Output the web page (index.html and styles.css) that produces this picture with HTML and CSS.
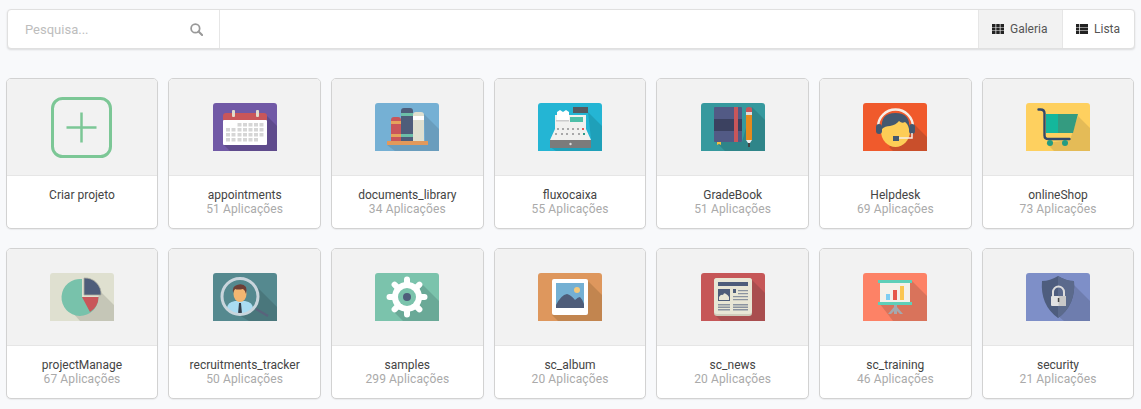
FILE: index.html
```html
<!DOCTYPE html>
<html lang="pt">
<head>
<meta charset="utf-8">
<title>Projetos</title>
<link rel="stylesheet" href="styles.css">
</head>
<body>
<header class="toolbar">
  <div class="search">
    <span class="placeholder">Pesquisa...</span>
    <svg class="search-icon" viewBox="0 0 14 14" width="13" height="13"><circle cx="5.8" cy="5.800" r="4.600" fill="none" stroke="#999" stroke-width="1.900"/><path d="M9.200 9.200 13 13" stroke="#999" stroke-width="2.200" stroke-linecap="round"/></svg>
  </div>
  <div class="spacer"></div>
  <div class="view view-gallery active">
    <svg viewBox="0 0 12 10" width="12" height="10" fill="#222"><path d="M0 0h3.500v2.900H0zM4.250 0h3.500v2.900h-3.500zM8.500 0H12v2.900H8.500zM0 3.550h3.500v2.900H0zM4.250 3.550h3.500v2.900h-3.500zM8.500 3.550H12v2.900H8.500zM0 7.100h3.500V10H0zM4.250 7.100h3.500V10h-3.500zM8.500 7.100H12V10H8.500z"/></svg>
    <span>Galeria</span>
  </div>
  <div class="view view-list">
    <svg viewBox="0 0 12 10" width="12" height="10" fill="#222"><path d="M0 0h3v2.900H0zM3.700 0H12v2.900H3.700zM0 3.550h3v2.900H0zM3.700 3.550H12v2.900H3.700zM0 7.100h3V10H0zM3.700 7.100H12V10H3.700z"/></svg>
    <span>Lista</span>
  </div>
</header>

<main class="grid">
  <article class="card">
    <div class="thumb">
      <svg viewBox="0 0 61 61" width="61" height="61"><rect x="1.500" y="1.500" width="58" height="58" rx="10" fill="none" stroke="#7cc796" stroke-width="3"/><path d="M30.500 15.500v30M15.500 30.500h30" stroke="#7cc796" stroke-width="2.500"/></svg>
    </div>
    <div class="info"><div class="name">Criar projeto</div></div>
  </article>

  <article class="card">
    <div class="thumb">
      <svg class="icon" viewBox="0 0 64 48" width="64" height="48">
        <rect width="64" height="48" fill="#7159a6"/>
        <path d="M54 13 64 23V48H17L10 41Z" fill="#5f4b8c"/>
        <rect x="10" y="17" width="44" height="25" rx="1" fill="#fff"/>
        <path d="M10 17v-4a3 3 0 0 1 3-3h38a3 3 0 0 1 3 3v4z" fill="#c9565a"/>
        <rect x="19" y="7" width="3" height="7" rx="1" fill="#e2dccb"/><rect x="43" y="7" width="3" height="7" rx="1" fill="#e2dccb"/>
        <path d="M24.500 20h4v3.500h-4zM30 20h4v3.500h-4zM35.500 20h4v3.500h-4zM41 20h4v3.500h-4zM46.500 20h4v3.500h-4zM13 25h4v3.500h-4zM18.500 25h4v3.500h-4zM24.500 25h4v3.500h-4zM30 25h4v3.500h-4zM35.500 25h4v3.500h-4zM41 25h4v3.500h-4zM46.500 25h4v3.500h-4zM13 30h4v3.500h-4zM18.500 30h4v3.500h-4zM24.500 30h4v3.500h-4zM30 30h4v3.500h-4zM35.500 30h4v3.500h-4zM41 30h4v3.500h-4zM46.500 30h4v3.500h-4zM13 35h4v3.500h-4zM18.500 35h4v3.500h-4zM24.500 35h4v3.500h-4zM30 35h4v3.500h-4zM35.500 35h4v3.500h-4zM41 35h4v3.500h-4z" fill="#d6d6d6"/>
      </svg>
    </div>
    <div class="info"><div class="name">appointments</div><div class="count">51 Aplicações</div></div>
  </article>

  <article class="card">
    <div class="thumb">
      <svg class="icon" viewBox="0 0 64 48" width="64" height="48">
        <rect width="64" height="48" fill="#75b0d4"/>
        <path d="M49 11 64 26V48H20L12 42 50 38Z" fill="#6a9dbd"/>
        <path d="M16 39V17q0-3 3-3h4q3 0 3 3v22z" fill="#c9565a"/>
        <path d="M16 18h10v3H16zM16 31h10v3H16z" fill="#e5a35c"/>
        <path d="M26 39V8q0-3 3-3h6q3 0 3 3v31z" fill="#4e5d7a"/>
        <path d="M26 10h12v3H26zM26 31h12v3H26z" fill="#6cbfa8"/>
        <path d="M38 39V12q0-3 3-3h5q3 0 3 3v27z" fill="#dfe0d0"/>
        <path d="M38 13h11v4H38z" fill="#fff"/>
        <rect x="12" y="38" width="41" height="4" fill="#e2995b"/>
      </svg>
    </div>
    <div class="info"><div class="name">documents_library</div><div class="count">34 Aplicações</div></div>
  </article>

  <article class="card">
    <div class="thumb">
      <svg class="icon" viewBox="0 0 64 48" width="64" height="48">
        <rect width="64" height="48" fill="#24b5d4"/>
        <path d="M50 9 64 23V48H18L12 44 53 36Z" fill="#1fa0b9"/>
        <rect x="35" y="4" width="15" height="6" fill="#555a60"/>
        <path d="M17 12h31v14l5 11H12l5-11z" fill="#f1f1ef"/>
        <path d="M19 9l3-2 3 2 3-2 3 2v8H19z" fill="#fff"/>
        <rect x="18" y="17" width="13" height="1.500" fill="#ccc"/>
        <rect x="32" y="14" width="13" height="5" fill="#4dbfa8"/>
        <path d="M19 25h2v2h-2zM24 25h2v2h-2zM29 25h2v2h-2zM34 25h2v2h-2zM39 25h2v2h-2zM17 30h2v2h-2zM23 30h2v2h-2zM28 30h2v2h-2zM34 30h2v2h-2zM40 30h2v2h-2z" fill="#a8a8a8"/>
        <rect x="44" y="25" width="2" height="2" fill="#e25c5c"/><rect x="45" y="30" width="2" height="2" fill="#2c9c88"/>
        <rect x="12" y="37" width="41" height="8" fill="#7b7b7b"/>
        <circle cx="32.500" cy="41" r="1.200" fill="#ddd"/>
      </svg>
    </div>
    <div class="info"><div class="name">fluxocaixa</div><div class="count">55 Aplicações</div></div>
  </article>

  <article class="card">
    <div class="thumb">
      <svg class="icon" viewBox="0 0 64 48" width="64" height="48">
        <rect width="64" height="48" fill="#36999e"/>
        <path d="M51 4 64 17V48H24L15 39 41 39Z" fill="#2f8589"/>
        <rect x="13" y="4" width="28" height="35" rx="1" fill="#525a85"/>
        <rect x="13" y="16" width="28" height="12" fill="#3b4160"/>
        <rect x="33" y="4" width="4" height="35" fill="#c9565a"/>
        <path d="M16 39h4v3l-2-1-2 1z" fill="#f0c040"/>
        <path d="M45 6q0-2 3-2t3 2v3h-6z" fill="#c9565a"/>
        <rect x="45" y="9" width="6" height="3" fill="#ddd"/>
        <rect x="45" y="12" width="6" height="25" fill="#e58a1e"/>
        <path d="M45 37h6l-2 3h-2z" fill="#eee"/><path d="M47 40h2v4h-2z" fill="#444"/>
      </svg>
    </div>
    <div class="info"><div class="name">GradeBook</div><div class="count">51 Aplicações</div></div>
  </article>

  <article class="card">
    <div class="thumb">
      <svg class="icon" viewBox="0 0 64 48" width="64" height="48">
        <rect width="64" height="48" fill="#f05a2c"/>
        <path d="M50 20 64 34V48H30L26 44 46 32Z" fill="#c94f2b"/>
        <path d="M15 24a17.500 17.500 0 0 1 35 0" fill="none" stroke="#f6eee6" stroke-width="2.400"/>
        <ellipse cx="32.500" cy="28" rx="14.500" ry="16" fill="#fdcd56"/>
        <path d="M19 26q-2-16 13.500-16T46 26q-1-5-4-7-3 2-6-1-3 4-9 5-5 0-8 3z" fill="#44586f"/>
        <rect x="13" y="21" width="6" height="10" rx="3" fill="#44586f"/>
        <rect x="46" y="21" width="6" height="10" rx="3" fill="#44586f"/>
        <path d="M49 30v5H36" fill="none" stroke="#f6eee6" stroke-width="1.500"/>
        <rect x="30" y="33" width="6" height="5" fill="#44586f"/>
      </svg>
    </div>
    <div class="info"><div class="name">Helpdesk</div><div class="count">69 Aplicações</div></div>
  </article>

  <article class="card">
    <div class="thumb">
      <svg class="icon" viewBox="0 0 64 48" width="64" height="48">
        <rect width="64" height="48" fill="#fed05f"/>
        <path d="M52 13 64 25V48H28L20 40 44 37Z" fill="#e4bb57"/>
        <path d="M20 11h12v19H20z" fill="#14b79c"/>
        <path d="M32 11h20l-5 19H32z" fill="#349b80"/>
        <path d="M12.500 6.500h2q4 0 4 4v22q0 3.500 4 3.500h21" fill="none" stroke="#33496a" stroke-width="2.400" stroke-linecap="round"/>
        <circle cx="24" cy="40" r="3" fill="#249c82"/><circle cx="39" cy="40" r="3" fill="#249c82"/>
      </svg>
    </div>
    <div class="info"><div class="name">onlineShop</div><div class="count">73 Aplicações</div></div>
  </article>

  <article class="card">
    <div class="thumb">
      <svg class="icon" viewBox="0 0 64 48" width="64" height="48">
        <rect width="64" height="48" fill="#dfe0d0"/>
        <path d="M50 18 64 32V48H30L22 39 46 32Z" fill="#c5c6b7"/>
        <path d="M32 6A18.500 18.500 0 1 0 48.500 24H32Z" fill="#78c2ab"/>
        <path d="M32 24h16.500A18 18 0 0 1 40 39Z" fill="#c9565a"/>
        <path d="M34 5a16 16 0 0 1 17 17H34Z" fill="#4e5d7a" stroke="#a9aba0" stroke-width=".8"/>
      </svg>
    </div>
    <div class="info"><div class="name">projectManage</div><div class="count">67 Aplicações</div></div>
  </article>

  <article class="card">
    <div class="thumb">
      <svg class="icon" viewBox="0 0 64 48" width="64" height="48">
        <rect width="64" height="48" fill="#55898f"/>
        <path d="M40 10 64 34V48H36L16 36Z" fill="#4a777c"/>
        <circle cx="27" cy="23.500" r="18" fill="#55898f"/>
        <path d="M14 36q0-7 8-8h10q8 1 8 8a18 18 0 0 1-26 0z" fill="#a9dcf2"/>
        <path d="M26 30h2l1 11h-4z" fill="#333d4a"/>
        <ellipse cx="27" cy="21" rx="6.500" ry="8" fill="#f3b671"/>
        <path d="M20 20q-1-7 4-8 6-2 9 2 1 3 0 7-1-4-3-5-5 1-8 0-1 1-2 4z" fill="#6d3f36"/>
        <circle cx="27" cy="23.500" r="18" fill="none" stroke="#c9d5dc" stroke-width="3"/>
        <path d="M43 36 55 43" stroke="#59637c" stroke-width="2.200"/>
      </svg>
    </div>
    <div class="info"><div class="name">recruitments_tracker</div><div class="count">50 Aplicações</div></div>
  </article>

  <article class="card">
    <div class="thumb">
      <svg class="icon" viewBox="0 0 64 48" width="64" height="48">
        <rect width="64" height="48" fill="#7bc3ac"/>
        <path d="M44 8 64 28V48H28L18 38Z" fill="#6aa997"/>
        <circle cx="32" cy="24" r="15" fill="#fff"/>
        <path d="M32 6.500V41.500M14.500 24H49.500M19.600 11.600 44.400 36.400M44.400 11.600 19.600 36.400" stroke="#fff" stroke-width="6" stroke-linecap="round"/>
        <circle cx="32" cy="24" r="9" fill="#7bc3ac"/>
        <circle cx="32" cy="24" r="4" fill="#4e5d7a"/>
      </svg>
    </div>
    <div class="info"><div class="name">samples</div><div class="count">299 Aplicações</div></div>
  </article>

  <article class="card">
    <div class="thumb">
      <svg class="icon" viewBox="0 0 64 48" width="64" height="48">
        <rect width="64" height="48" fill="#de975d"/>
        <path d="M50 8 64 22V48H20L14 42Z" fill="#c2854f"/>
        <rect x="14" y="6" width="36" height="36" rx="2" fill="#fff"/>
        <rect x="18" y="10" width="28" height="25" fill="#74b0d3"/>
        <circle cx="39" cy="17" r="3" fill="#f5c97a"/>
        <path d="M18 35v-3q5-10 11-11 4 1 8 6 3-3 5-3 3 3 4 7v4z" fill="#4e5d7a"/>
      </svg>
    </div>
    <div class="info"><div class="name">sc_album</div><div class="count">20 Aplicações</div></div>
  </article>

  <article class="card">
    <div class="thumb">
      <svg class="icon" viewBox="0 0 64 48" width="64" height="48">
        <rect width="64" height="48" fill="#c65758"/>
        <path d="M50 6 64 20V48H20L14 42Z" fill="#a94e4f"/>
        <rect x="13" y="5" width="38" height="38" rx="3" fill="#cfcdbc"/>
        <rect x="13" y="5" width="38" height="36" rx="3" fill="#e8e6d5"/>
        <rect x="17" y="9" width="30" height="4" fill="#4e5d7a"/>
        <rect x="17" y="16" width="12" height="12" fill="#4e5d7a"/>
        <path d="M18 27v-3q2-3 4-2 1-3 3-1 2 1 3 3v3z" fill="#e8e6d5"/>
        <rect x="32" y="16" width="3" height="4" fill="#4e5d7a"/>
        <path d="M37 17h10v1.200H37zM37 20h10v1.200H37zM32 23h15v1.200H32zM32 26h15v1.200H32zM17 31h12v1.500H17zM17 33.500h12v1.500H17zM17 36h12v1.500H17zM32 31h15v1.500H32zM32 33.500h15v1.500H32zM32 36h15v1.500H32z" fill="#8a93a0"/>
      </svg>
    </div>
    <div class="info"><div class="name">sc_news</div><div class="count">20 Aplicações</div></div>
  </article>

  <article class="card">
    <div class="thumb">
      <svg class="icon" viewBox="0 0 64 48" width="64" height="48">
        <rect width="64" height="48" fill="#fd8266"/>
        <path d="M49 8 64 23V48H30L17 31Z" fill="#d9735b"/>
        <path d="M31 30h3v4l6 7h-3l-3-3v3h-3v-3l-3 3h-3l6-7z" fill="#a4a9ae"/>
        <rect x="17" y="9" width="30" height="21" fill="#f4f1ea"/>
        <rect x="15" y="7" width="34" height="3" fill="#5fcfb8"/>
        <rect x="15" y="29" width="34" height="3" fill="#5fcfb8"/>
        <rect x="23" y="21" width="4" height="6" fill="#7fcdf2"/>
        <rect x="30" y="17" width="4" height="10" fill="#e6584a"/>
        <rect x="37" y="13" width="4" height="14" fill="#fbc64f"/>
      </svg>
    </div>
    <div class="info"><div class="name">sc_training</div><div class="count">46 Aplicações</div></div>
  </article>

  <article class="card">
    <div class="thumb">
      <svg class="icon" viewBox="0 0 64 48" width="64" height="48">
        <rect width="64" height="48" fill="#7e8fc8"/>
        <path d="M44 8 64 28V48H38L26 38Z" fill="#6e7dae"/>
        <path d="M32 3q8 5 16 5 2 24-16 37Q14 32 16 8q8 0 16-5z" fill="#4e5d7e"/>
        <path d="M32 3q8 5 16 5 2 24-16 37z" fill="#5b6a8c"/>
        <path d="M27 23v-4a5.500 5.500 0 0 1 11 0v4" fill="none" stroke="#ddd" stroke-width="2"/>
        <rect x="25" y="23" width="15" height="10" rx="1" fill="#e2e2e2"/>
        <rect x="32.500" y="23" width="7.500" height="10" fill="#c8c8c8"/>
        <rect x="31.800" y="25" width="1.500" height="4" fill="#444"/>
      </svg>
    </div>
    <div class="info"><div class="name">security</div><div class="count">21 Aplicações</div></div>
  </article>
</main>
</body>
</html>
```

FILE: styles.css
```css
* { box-sizing: border-box; }
html, body { margin: 0; height: 100%; }
body {
  background: #f8f9fb;
  font-family: Roboto, "Liberation Sans", sans-serif;
  font-size: 12px;
  color: #333;
  overflow: hidden;
}
.toolbar {
  display: flex;
  height: 40px;
  margin: 9px 6px 0 7px;
  background: #fff;
  border: 1px solid #e0e0e0;
  border-radius: 4px;
  box-shadow: 0 1px 2px rgba(0,0,0,.12);
  overflow: hidden;
}
.search {
  display: flex;
  align-items: center;
  justify-content: space-between;
  width: 212px;
  padding: 0 16px 0 17px;
  border-right: 1px solid #e6e6e6;
}
.placeholder { font-size: 13px; color: #bdbdbd; }
.spacer { flex: 1; }
.view {
  display: flex;
  align-items: center;
  gap: 6px;
  padding-left: 13px;
  font-size: 12px;
  color: #555;
  border-left: 1px solid #e6e6e6;
}
.view-gallery { width: 84px; }
.view-list { width: 72px; }
.view.active { background: #f2f2f2; }
.grid {
  display: grid;
  grid-template-columns: repeat(7, 1fr);
  column-gap: 10px;
  row-gap: 19px;
  padding: 29px 6.67px 0 5.67px;
}
.card {
  height: 151px;
  background: #fff;
  border: 1px solid #d2d2d2;
  border-radius: 5px;
  box-shadow: 0 1px 1px rgba(0,0,0,.06);
  overflow: hidden;
}
.thumb {
  display: flex;
  align-items: center;
  justify-content: center;
  height: 97px;
  background: #f2f2f2;
  border-bottom: 1px solid #e6e6e6;
}
.icon { display: block; border-radius: 3px 3px 0 0; }
.info { padding-top: 12px; text-align: center; line-height: 14px; }
.name { color: #444; }
.count { color: #aaa; letter-spacing: .12px; }
```
